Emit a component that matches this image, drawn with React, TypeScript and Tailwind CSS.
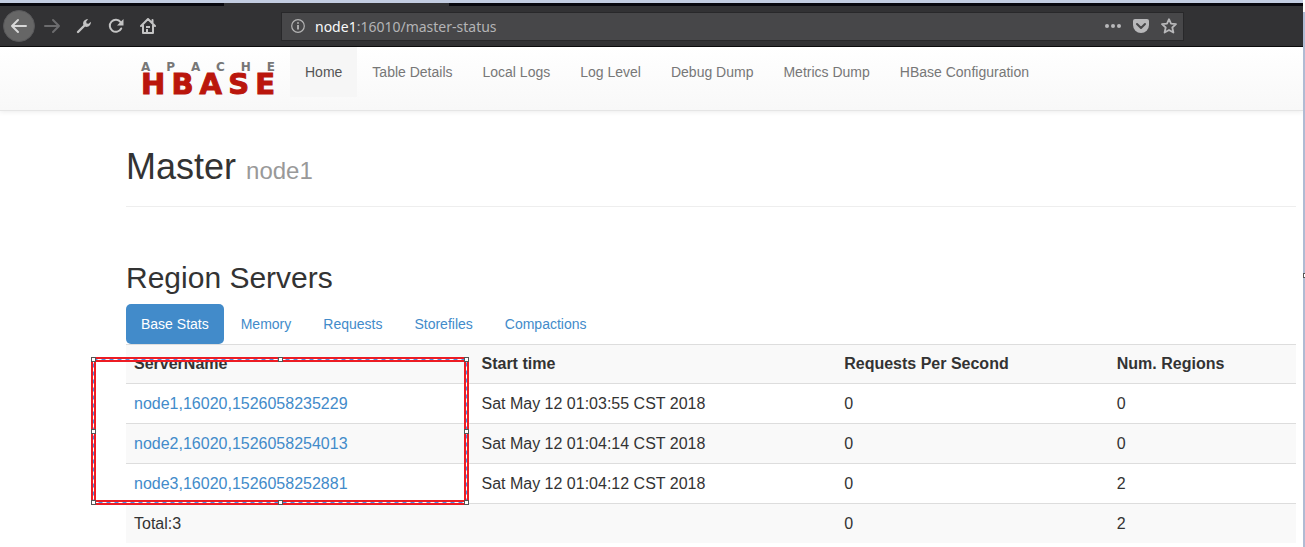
import React from "react";

const navItems = ["Home", "Table Details", "Local Logs", "Log Level", "Debug Dump", "Metrics Dump", "HBase Configuration"];
const tabs = ["Base Stats", "Memory", "Requests", "Storefiles", "Compactions"];
const servers = [
  { name: "node1,16020,1526058235229", start: "Sat May 12 01:03:55 CST 2018", rps: 0, regions: 0 },
  { name: "node2,16020,1526058254013", start: "Sat May 12 01:04:14 CST 2018", rps: 0, regions: 0 },
  { name: "node3,16020,1526058252881", start: "Sat May 12 01:04:12 CST 2018", rps: 0, regions: 2 },
];

function Logo() {
  return (
    <a href="#" aria-label="Apache HBase" className="mt-[14px] block w-[134px] font-['DejaVu_Sans'] font-bold">
      <span className="flex h-3 justify-between text-[12px] leading-[12px] text-[#777]">
        {"APACHE".split("").map((c, i) => <span key={i}>{c}</span>)}
      </span>
      <span className="flex h-[23px] justify-between text-[29px] leading-[23px] text-[#ba160c] [-webkit-text-stroke:1px_#ba160c]">
        {"HBASE".split("").map((c, i) => <span key={i}>{c}</span>)}
      </span>
    </a>
  );
}

function BrowserBar() {
  return (
    <div className="bg-[#323234]">
      <div className="h-[3px] bg-[#c3cde1]" />
      <div className="flex h-[3px]">
        <div className="w-[224px] bg-[#08080e]" />
        <div className="w-[225px]" />
        <div className="flex-1 bg-[#08080e]" />
      </div>
      <div className="flex h-10 items-center pl-[3px]">
        <button aria-label="Back" className="flex size-8 shrink-0 items-center justify-center rounded-full border border-[#58585a] bg-[#666]">
          <svg width="18" height="16" viewBox="0 0 18 16" fill="none" stroke="#d8d8d8" strokeWidth="2" strokeLinecap="round" strokeLinejoin="round"><path d="M16 8H2M8 2L2 8l6 6" /></svg>
        </button>
        <button aria-label="Forward" className="ml-2 flex size-[18px] items-center justify-center">
          <svg width="18" height="16" viewBox="0 0 18 16" fill="none" stroke="#6c6c6e" strokeWidth="2" strokeLinecap="round" strokeLinejoin="round"><path d="M2 8h14M10 2l6 6-6 6" /></svg>
        </button>
        <button aria-label="Developer tools" className="ml-[15px] flex size-4 items-center justify-center">
          <svg width="16" height="16" viewBox="0 0 16 16"><path d="M2 14L8.500 7.500" stroke="#c4c4c4" strokeWidth="2.400" strokeLinecap="round" /><path d="M7.200 6.500C6.600 3.200 9 .8 12.200 1.200L10.200 3.400l.4 2 2 .4 2.200-2c.4 3.200-2 5.600-5.300 5z" fill="#c4c4c4" /></svg>
        </button>
        <button aria-label="Reload" className="ml-4 flex size-4 items-center justify-center">
          <svg width="16" height="16" viewBox="0 0 16 16"><path d="M13.200 10.500A6 6 0 1 1 12.600 4.200" fill="none" stroke="#c4c4c4" strokeWidth="2" strokeLinecap="round" /><path d="M15.500 1v6.500H9z" fill="#c4c4c4" /></svg>
        </button>
        <button aria-label="Home" className="ml-4 flex size-4 items-center justify-center">
          <svg width="16" height="16" viewBox="0 0 16 16" fill="none" stroke="#c4c4c4" strokeWidth="2" strokeLinecap="round" strokeLinejoin="round"><path d="M1 8l7-7 7 7M3 7.500V15h10V7.500M12.500 5V2" /><path d="M6 8h4v2H6zM6 11h2v4H6z" fill="#c4c4c4" stroke="none" /></svg>
        </button>
        <div className="ml-[125px] mr-[119px] flex h-[29px] flex-1 items-center border border-[#28282a] bg-[#474749] pl-[9px] pr-[6px]">
          <svg width="14" height="14" viewBox="0 0 14 14" fill="none" stroke="#b4b4b4"><circle cx="7" cy="7" r="6.300" strokeWidth="1.200" /><path d="M7 6v4.500M7 3.200v1.600" strokeWidth="1.800" /></svg>
          <div className="ml-[10px] flex-1 pt-[2px] font-['Noto_Sans',sans-serif] text-sm text-[#b4b4b6]"><span className="text-[#f9f9fa]">node1</span>:16010/master-status</div>
          <button aria-label="Page actions" className="mr-3"><svg width="16" height="16" viewBox="0 0 16 16" fill="#b8b8ba"><circle cx="2" cy="8" r="2" /><circle cx="8" cy="8" r="2" /><circle cx="14" cy="8" r="2" /></svg></button>
          <button aria-label="Save to Pocket" className="mr-3"><svg width="16" height="16" viewBox="0 0 16 16"><path d="M2 1h12q2 0 2 2v4a8 8 0 0 1-16 0V3q0-2 2-2z" fill="#b8b8ba" /><path d="M4 6l4 4 4-4" fill="none" stroke="#474749" strokeWidth="2" strokeLinecap="round" strokeLinejoin="round" /></svg></button>
          <button aria-label="Bookmark"><svg width="16" height="16" viewBox="0 0 16 16" fill="none" stroke="#b8b8ba" strokeWidth="1.800" strokeLinejoin="round"><path d="M8 1.200l2 4.500 5 .5-3.700 3.300 1.100 5L8 12l-4.400 2.500 1.100-5L1 6.200l5-.5z" /></svg></button>
        </div>
      </div>
      <div className="h-px bg-[#0c0c0d]" />
    </div>
  );
}

const W = 378;
const H = 148;
const handles = [[0, 0], [187, 0], [373, 0], [0, 72], [373, 72], [0, 143], [187, 143], [373, 143]];

function Selection() {
  return (
    <svg aria-hidden="true" className="pointer-events-none absolute -left-[35px] top-[13px]" width={W} height={H} fill="none">
      <rect x="2.5" y="2.5" width={W - 5} height={H - 5} stroke="#ed1c24" strokeWidth="5" />
      <rect x="2.5" y="2.5" width={W - 5} height={H - 5} stroke="#fff" strokeWidth="1" />
      <rect x="2.5" y="2.5" width={W - 5} height={H - 5} stroke="#4a90e8" strokeWidth="1" strokeDasharray="4 4" />
      {handles.map(([x, y]) => <rect key={`${x}-${y}`} x={x + 0.5} y={y + 0.5} width="4" height="4" fill="#fff" stroke="#555" />)}
    </svg>
  );
}

export default function App() {
  return (
    <div className="relative min-h-screen overflow-hidden bg-white pr-[2px] font-['Liberation_Sans',Arial,sans-serif] text-[#333]">
      <BrowserBar />
      <header className="flex h-16 items-start border-b border-[#e5e5e5] bg-linear-to-b from-white to-[#f8f8f8] pl-[141px] shadow-[0_1px_5px_rgba(0,0,0,0.08)]">
        <Logo />
        <nav className="ml-[15px] flex whitespace-nowrap text-sm leading-5 text-[#777]">
          {navItems.map((item, i) => (
            <a key={item} href="#" className={i === 0 ? "bg-[#f6f6f6] px-[15px] py-[15px] text-[#555]" : "px-[15px] py-[15px]"}>{item}</a>
          ))}
        </nav>
      </header>
      <main className="pl-[126px] pr-[7px]">
        <div className="border-b border-[#eee] pb-[19px] pt-9">
          <h1 className="text-4xl leading-10">Master <small className="text-2xl leading-6 text-[#999]">node1</small></h1>
        </div>
        <h2 className="mt-[55px] text-3xl leading-8">Region Servers</h2>
        <div className="mt-[10px] flex gap-[2px] text-sm leading-5">
          {tabs.map((tab, i) => (
            <a key={tab} href="#" className={i === 0 ? "rounded-[5px] bg-[#428bca] px-[15px] py-[10px] text-white" : "px-[15px] py-[10px] text-[#428bca]"}>{tab}</a>
          ))}
        </div>
        <div className="relative">
          <table className="w-full table-fixed border-collapse text-left text-base leading-[23px]">
            <thead className="leading-[22px]">
              <tr className="border-t border-[#ddd] bg-[#f9f9f9]">
                <th className="w-[29.7%] p-2">ServerName</th>
                <th className="w-[31%] p-2">Start time</th>
                <th className="w-[23.3%] p-2">Requests Per Second</th>
                <th className="p-2">Num. Regions</th>
              </tr>
            </thead>
            <tbody>
              {servers.map((s, i) => (
                <tr key={s.name} className={i % 2 ? "border-t border-[#ddd] bg-[#f9f9f9]" : "border-t border-[#ddd]"}>
                  <td className="p-2"><a href="#" className="text-[#428bca]">{s.name}</a></td>
                  <td className="p-2">{s.start}</td>
                  <td className="p-2">{s.rps}</td>
                  <td className="p-2">{s.regions}</td>
                </tr>
              ))}
              <tr className="border-t border-[#ddd] bg-[#f9f9f9]">
                <td className="p-2">Total:3</td>
                <td className="p-2" />
                <td className="p-2">0</td>
                <td className="p-2">2</td>
              </tr>
            </tbody>
          </table>
          <Selection />
        </div>
      </main>
      <div className="absolute bottom-0 right-0 top-3 w-[2px] bg-[#b0bbd3]" />
      <div className="absolute right-0 top-[273px] h-[5px] w-[2px] border-y border-l border-[#555] bg-white" />
    </div>
  );
}
